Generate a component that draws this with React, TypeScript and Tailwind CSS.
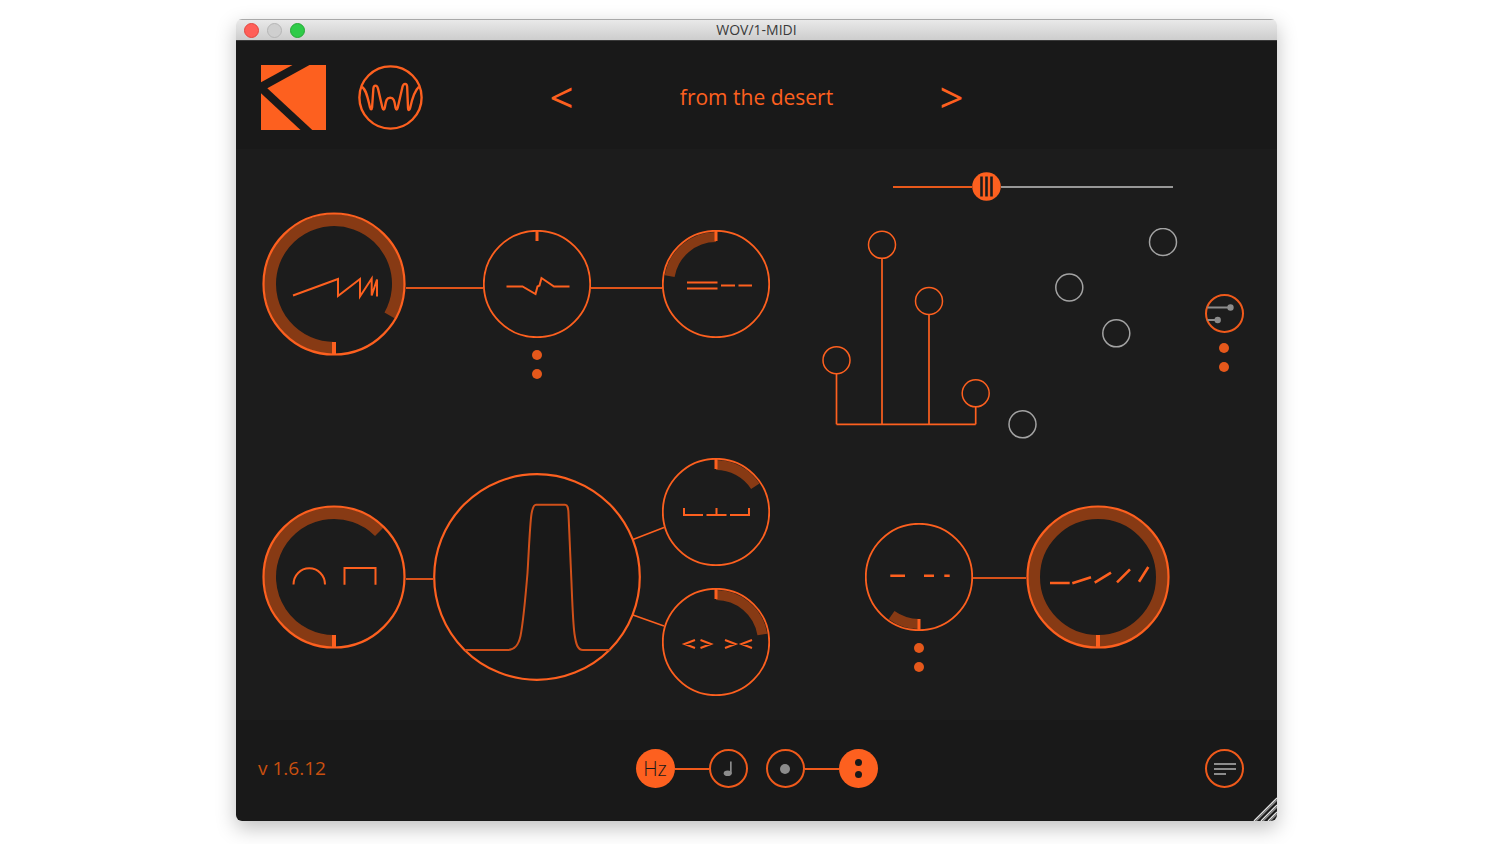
import { useState } from 'react';
import type { ReactNode } from 'react';

const ORANGE = '#fd601f';
const TRACK = '#873a14';

// angles are in degrees, clockwise from 12 o'clock
function point(c: number, r: number, deg: number) {
  const a = ((deg - 90) * Math.PI) / 180;
  return `${c + r * Math.cos(a)} ${c + r * Math.sin(a)}`;
}

function arc(c: number, r: number, from: number, to: number) {
  return `M${point(c, r, from)} A${r} ${r} 0 ${to - from > 180 ? 1 : 0} 1 ${point(c, r, to)}`;
}

interface KnobProps {
  label: string;
  large?: boolean;
  tick?: 'top' | 'bottom';
  from?: number;
  to?: number;
  children: ReactNode;
}

function Knob({ label, large, tick = 'top', from = 0, to = 0, children }: KnobProps) {
  const size = large ? 144 : 108;
  const c = size / 2;
  const ring = large ? 12 : 10;
  const ringRadius = c - 2 - ring / 2;
  const span = to - from;

  return (
    <div className={large ? 'relative size-36 shrink-0' : 'relative size-[108px] shrink-0'}>
      <svg viewBox={`0 0 ${size} ${size}`} className="block size-full" fill="none" aria-hidden="true">
        {span >= 360 && <circle cx={c} cy={c} r={ringRadius} stroke={TRACK} strokeWidth={ring} />}
        {span > 0 && span < 360 && (
          <path d={arc(c, ringRadius, from, to)} stroke={TRACK} strokeWidth={ring} />
        )}
        <circle cx={c} cy={c} r={large ? 70.5 : 53.2} stroke={ORANGE} strokeWidth={large ? 2.2 : 1.8} />
        <path
          d={tick === 'top' ? `M${c} 1V${ring + 1}` : `M${c} ${size - 1}V${size - ring - 2}`}
          stroke={ORANGE}
          strokeWidth={large ? 4 : 3}
        />
        <g stroke={ORANGE} strokeWidth="2">
          {children}
        </g>
      </svg>
      <input
        type="range"
        aria-label={label}
        min={0}
        max={360}
        defaultValue={span}
        className="absolute inset-0 size-full cursor-pointer opacity-0"
      />
    </div>
  );
}

function Dots({ className }: { className: string }) {
  return (
    <div className={`flex flex-col items-center gap-[9px] ${className}`}>
      <span className="size-[10px] rounded-full bg-[#e5581b]" />
      <span className="size-[10px] rounded-full bg-[#e5581b]" />
    </div>
  );
}

function RoundButton({ label, filled, children }: { label: string; filled?: boolean; children: ReactNode }) {
  return (
    <button
      type="button"
      aria-label={label}
      className={
        filled
          ? 'flex size-[39px] shrink-0 items-center justify-center rounded-full bg-[#fd601f] text-[#191919]'
          : 'flex size-[39px] shrink-0 items-center justify-center rounded-full border-2 border-[#f05a1b] text-[#8c8c8c]'
      }
    >
      {children}
    </button>
  );
}

function TitleBar() {
  return (
    <div className="grid h-[22px] grid-cols-[1fr_auto_1fr] items-center border-t border-b border-t-[#a9a9a9] border-b-[#3a3a3a] bg-linear-to-b from-[#e9e9e9] to-[#cdcdcd] px-2">
      <div className="flex gap-2">
        <button type="button" aria-label="Close" className="size-[15px] rounded-full border border-[#e2463f] bg-[#ff5f58]" />
        <button type="button" aria-label="Minimize" className="size-[15px] rounded-full border border-[#b5b5b5] bg-[#cfcfcf]" />
        <button type="button" aria-label="Zoom" className="size-[15px] rounded-full border border-[#25a835] bg-[#2ecb48]" />
      </div>
      <h1 className="font-['Open_Sans',sans-serif] text-sm leading-5 text-[#3a3a3a]">WOV/1-MIDI</h1>
    </div>
  );
}

function Header() {
  return (
    <header className="grid grid-cols-[1fr_auto_1fr] items-center bg-[#191919] pt-6 pr-[25px] pb-[19px] pl-[25px]">
      <div className="flex gap-8">
        <svg viewBox="0 0 65 65" className="size-[65px]" fill={ORANGE} aria-hidden="true">
          <path d="M0 0H31.5L0 17.3Z" />
          <path d="M48.5 0H65V65H51.3L6.3 23.3Z" />
          <path d="M0 28.3L39.5 65H0Z" />
        </svg>
        <svg viewBox="0 0 66 66" className="size-[65px]" fill="none" stroke={ORANGE} strokeWidth="2.4" aria-hidden="true">
          <circle cx="33" cy="33" r="31.6" />
          <path
            strokeLinejoin="round"
            d="M4 22C8.500 25 10 34 12.200 43C12.800 45.800 14 45.600 14.300 43L15.600 24C16 20 19.300 20 20.300 24L24.800 43.500C25.400 46 26.700 46 27.200 43.500C28.400 37 28.500 33.300 32.700 33.300C36.900 33.300 37 37 38.100 43.500C38.700 46 39.700 46 40.300 43.500L45.200 22C46.200 18.300 49.600 18 49.900 22L50.800 43.500C51 46.600 52.400 46.400 53 43.500C55 34 57.500 26 62 22"
          />
        </svg>
      </div>
      <div className="flex w-[414px] items-center justify-between pb-0.5 font-['Open_Sans',sans-serif] text-[#fd601f]">
        <button type="button" aria-label="Previous preset" className="text-[42px] leading-[56px] font-normal">
          &lt;
        </button>
        <p className="text-[21px] leading-8">from the desert</p>
        <button type="button" aria-label="Next preset" className="text-[42px] leading-[56px] font-normal">
          &gt;
        </button>
      </div>
    </header>
  );
}

function ShapeRow() {
  return (
    <section className="flex items-start pt-[63px]">
      <Knob label="Rate" large tick="bottom" from={180} to={479.5}>
        <path d="M31 83.500L76 67V84L98 67V84.500L109.700 66.500V83.500L115 67.500V84.500" />
      </Knob>
      <div className="mt-[75px] h-[2px] flex-[77] bg-[#e0541a]" />
      <div className="mt-[18px]">
        <Knob label="Phase">
          <path d="M23.500 56.500H39.500L52.500 64L54.500 56.500L56.500 55.500L58.500 48L71 56.500H86.500" />
        </Knob>
        <Dots className="mt-3" />
      </div>
      <div className="mt-[75px] h-[2px] flex-[71] bg-[#e0541a]" />
      <div className="mt-[18px]">
        <Knob label="Lag" from={279.6} to={360}>
          <path d="M25 52.500H55.500M25 58.500H55.500M59 55.500H73M76.500 55.500H90" />
        </Knob>
      </div>
    </section>
  );
}

function FilterRow() {
  return (
    <section className="flex items-center">
      <Knob label="Shape" large tick="bottom" from={180} to={405}>
        <path d="M31.500 79.500A15.700 16.200 0 0 1 63 79.500M82.500 79.700V63H113.500V79.700" />
      </Knob>
      <div className="mt-1 h-[2px] flex-1 bg-[#d9521a]" />
      <svg viewBox="0 0 208 208" className="size-52 shrink-0" fill="none" role="img" aria-label="Modulation shape">
        <circle cx="104" cy="104" r="102.800" fill="#191919" stroke={ORANGE} strokeWidth="2.200" />
        <path
          stroke="#d0501a"
          strokeWidth="2"
          d="M32 177H74C82 177 85.500 172 87.500 163C90.500 148 92 130 94.500 100C96 75 97 50 98.500 41C99.500 35 100.500 31.700 103 31.700H132C134.500 31.700 135.300 34 135.500 41C136.500 60 137.500 85 138.500 110C139.500 135 140 150 141.500 161C143 171 144.500 177 150 177H177"
        />
      </svg>
      <svg viewBox="0 0 21 238" className="h-[238px] w-[21px] shrink-0 overflow-visible" fill="none" stroke={ORANGE} strokeWidth="1.600" aria-hidden="true">
        <path d="M-8 81.500L23 69.500M-8 157L23 168" />
      </svg>
      <div className="flex flex-col gap-[22px]">
        <Knob label="Smooth" from={0} to={56.7}>
          <path d="M22 50V57H41M44.500 57H64.500M54.500 50V57M68 57H87V50" />
        </Knob>
        <Knob label="Width" from={0} to={80.8}>
          <path d="M33 52L22.500 56L33 60M38.500 52L49 56L38.500 60M63 52L73.500 56L63 60M90 52L79.500 56L90 60" />
        </Knob>
      </div>
    </section>
  );
}

// pin centres and the line they rise from
const BASELINE = 196.3;
const pins = [
  { x: 14.5, y: 132.2, active: true },
  { x: 60, y: 16.8, active: true },
  { x: 107, y: 73, active: true },
  { x: 153.7, y: 165.3, active: true },
  { x: 200.5, y: 196.3, active: false },
  { x: 247.3, y: 59.5, active: false },
  { x: 294.3, y: 105.3, active: false },
  { x: 341, y: 14, active: false },
];

function PinChart() {
  return (
    <div className="relative mt-[27px]">
      <svg viewBox="0 0 356 211" className="block w-full" fill="none" strokeWidth="1.500" aria-hidden="true">
        <path d={`M14.500 ${BASELINE}H153.700`} stroke={ORANGE} strokeWidth="1.800" />
        {pins.map((pin) => (
          <g key={pin.x} stroke={pin.active ? ORANGE : '#a3a3a3'}>
            <circle cx={pin.x} cy={pin.y} r="13.500" />
            {pin.active && <path d={`M${pin.x} ${pin.y + 13.5}V${BASELINE}`} strokeWidth="1.700" />}
          </g>
        ))}
      </svg>
      <div className="absolute inset-0 grid grid-cols-8">
        {pins.map((pin, idx) => (
          <input
            key={pin.x}
            type="range"
            aria-label={`Step ${idx + 1}`}
            min={0}
            max={200}
            defaultValue={Math.round(BASELINE - pin.y)}
            className="h-full w-full cursor-pointer opacity-0 [direction:rtl] [writing-mode:vertical-lr]"
          />
        ))}
      </div>
    </div>
  );
}

function StepSlider() {
  const [value, setValue] = useState(79);

  return (
    <div className="relative mr-[5px] ml-[71px] flex h-[29px] items-center">
      <span className="h-[2px] bg-[#e9591b]" style={{ flexGrow: value }} />
      <svg viewBox="0 0 29 29" className="size-[29px] shrink-0" aria-hidden="true">
        <circle cx="14.500" cy="14.500" r="14.300" fill={ORANGE} />
        <path d="M9.500 4.500V24.500M14.500 4.500V24.500M19.500 4.500V24.500" stroke="#1c1c1c" strokeWidth="2.600" />
      </svg>
      <span className="h-[2px] bg-[#979797]" style={{ flexGrow: 251 - value }} />
      <input
        type="range"
        aria-label="Steps"
        min={0}
        max={251}
        value={value}
        onChange={(e) => setValue(Number(e.target.value))}
        className="absolute inset-0 size-full cursor-pointer opacity-0"
      />
    </div>
  );
}

function StepPanel() {
  return (
    <section className="flex gap-[27px] pl-[52px]">
      <div className="min-w-0 flex-1 pt-[23px]">
        <StepSlider />
        <PinChart />
      </div>
      <div className="flex w-[38px] flex-col items-center pt-[145px]">
        <RoundButton label="Step options">
          <svg viewBox="0 0 38 38" className="size-[38px] shrink-0" fill="#8c8c8c" stroke="#8c8c8c" strokeWidth="1.800" aria-hidden="true">
            <path d="M2.500 12.500H25M2.500 25H12" />
            <circle cx="25.500" cy="12.500" r="2.300" />
            <circle cx="12.700" cy="25" r="2.300" />
          </svg>
        </RoundButton>
        <Dots className="mt-[10px]" />
      </div>
    </section>
  );
}

function OutputRow() {
  return (
    <section className="flex items-start pr-[73px] pl-[95px]">
      <div className="mt-[65px]">
        <Knob label="Delay" tick="bottom" from={180} to={215.7}>
          <path strokeWidth="2.600" d="M25.300 52.700H40M59 52.700H69M79.300 52.700H84.700" />
        </Knob>
        <Dots className="mt-3" />
      </div>
      <div className="mt-[119px] h-[2px] flex-1 bg-[#d9521a]" />
      <div className="mt-[47px]">
        <Knob label="Depth" large tick="bottom" from={180} to={540}>
          <path
            strokeWidth="2.600"
            d="M24 78H43.700M46.300 78.300L65 72.300M68.700 77.700L85 67.700M91 77.300L104 64.300M113 76.700L122.300 62"
          />
        </Knob>
      </div>
    </section>
  );
}

function Footer() {
  return (
    <footer className="relative grid grid-cols-[1fr_auto_1fr] items-center bg-[#191919] pt-[29px] pr-[33px] pb-[33px] pl-[22px]">
      <p className="pb-0.5 font-['Open_Sans',sans-serif] text-[19px] leading-7 text-[#c9500f]">v 1.6.12</p>
      <div className="ml-[11px] flex items-center">
        <RoundButton label="Rate in hertz" filled>
          <span className="font-['Open_Sans',sans-serif] text-xl leading-7 font-light">Hz</span>
        </RoundButton>
        <span className="h-[2px] w-[34px] bg-[#f05a1b]" />
        <RoundButton label="Rate in note values">
          <svg viewBox="0 0 12 16" className="h-4 w-3" fill="currentColor" aria-hidden="true">
            <ellipse cx="5.700" cy="12.300" rx="4" ry="2.800" />
            <path d="M8 0.500H9.700V12.500H8Z" />
          </svg>
        </RoundButton>
        <span className="w-[18px]" />
        <RoundButton label="Single">
          <span className="size-[10px] rounded-full bg-[#8c8c8c]" />
        </RoundButton>
        <span className="h-[2px] w-[34px] bg-[#f05a1b]" />
        <RoundButton label="Double" filled>
          <span className="flex flex-col gap-[5px]">
            <span className="size-[7px] rounded-full bg-[#191919]" />
            <span className="size-[7px] rounded-full bg-[#191919]" />
          </span>
        </RoundButton>
      </div>
      <div className="flex justify-end">
        <RoundButton label="Menu">
          <svg viewBox="0 0 22 12" className="h-3 w-[22px]" stroke="currentColor" strokeWidth="2" aria-hidden="true">
            <path d="M0 1H22M0 6H22M0 11H12" />
          </svg>
        </RoundButton>
      </div>
      <svg viewBox="0 0 24 24" className="absolute right-0 bottom-0 size-6" fill="none" strokeWidth="1.400" aria-hidden="true">
        <path d="M1 24L24 1M8 24L24 8M15 24L24 15" stroke="#e4e4e4" />
        <path d="M3 24L24 3M10 24L24 10M17 24L24 17" stroke="#8a8a8a" />
      </svg>
    </footer>
  );
}

export default function App() {
  return (
    <div className="min-h-screen bg-white pt-[19px] pr-[223px] pb-[22px] pl-[236px]">
      <div className="overflow-hidden rounded-md shadow-[0_7px_20px_rgba(0,0,0,0.25)]">
        <TitleBar />
        <Header />
        <main className="grid grid-cols-[508fr_473fr] gap-y-[19px] bg-[#1c1c1c] pr-[34px] pb-6 pl-[26px]">
          <ShapeRow />
          <StepPanel />
          <FilterRow />
          <OutputRow />
        </main>
        <Footer />
      </div>
    </div>
  );
}
